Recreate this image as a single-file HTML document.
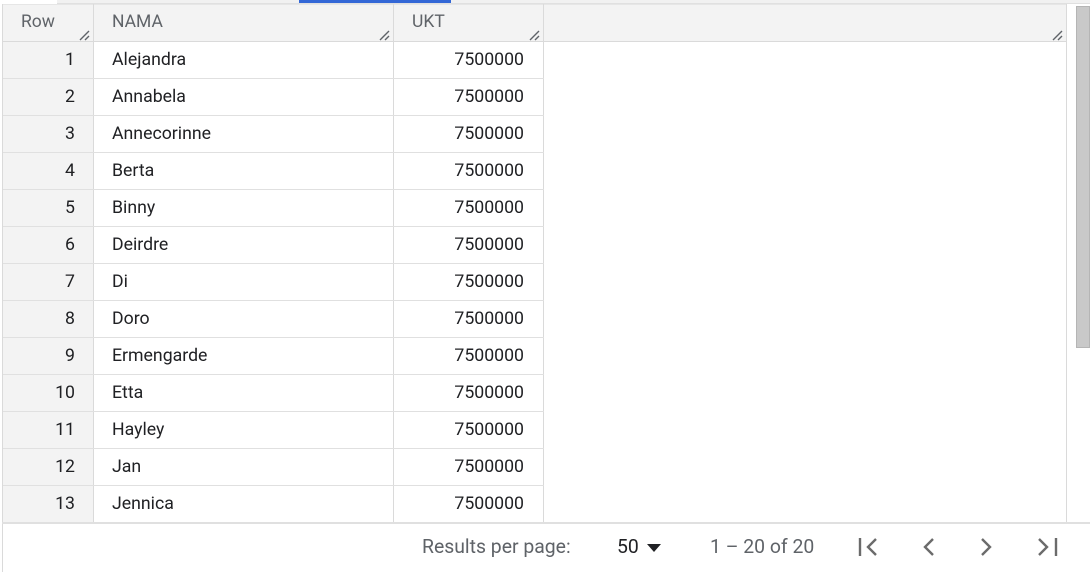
<!DOCTYPE html>
<html><head><meta charset="utf-8"><style>
*{margin:0;padding:0;box-sizing:border-box}
body{width:1090px;height:572px;overflow:hidden;background:#fff;font-family:"Roboto","Liberation Sans",sans-serif;color:#202124;position:relative}
.a{position:absolute}
.top{left:0;top:0;width:1090px;height:4px;background:#f1f1f1;border-bottom:1px solid #e0e0e0}
.blue{left:299px;top:0;width:152px;height:3px;background:#3367d6}
.hdr{left:3px;top:4px;width:1063px;height:38px;background:#f3f3f3;border-bottom:1px solid #dadada;border-top:1px solid #e6e6e6}
.vl{width:1px;background:#dadada}
.hl{height:1px;background:#e0e0e0}
.h{font-size:17.5px;color:#5f6368;top:12px}
.t{font-size:17.7px;line-height:37px}
.ft{font-size:19.4px;color:#5f6368;top:535px}
</style></head><body>
<div class="a top"></div><div class="a" style="left:0;top:0;width:57px;height:4px;background:#fff"></div><div class="a blue"></div>
<div class="a" style="left:3px;top:42px;width:90px;height:481px;background:#f3f3f3"></div>
<div class="a hdr"></div>
<div class="a" style="left:2px;top:4px;width:1px;height:568px;background:#dadada"></div>
<div class="a vl" style="left:93px;top:4px;height:519px"></div>
<div class="a vl" style="left:393px;top:4px;height:519px"></div>
<div class="a vl" style="left:543px;top:4px;height:519px"></div>
<div class="a vl" style="left:1066px;top:4px;height:519px"></div>
<div class="a" style="left:2px;top:522px;width:1088px;height:2px;background:#e0e0e0"></div>
<div class="a" style="left:1076px;top:6px;width:14px;height:342px;background:#c9c9c9;border:1px solid #b5b5b5"></div>
<div class="a h" style="left:21px">Row</div>
<div class="a h" style="left:112px">NAMA</div>
<div class="a h" style="left:412px">UKT</div>
<svg class="a" style="left:0;top:0" width="1090" height="50">
<g stroke="#5f6368" stroke-width="1.4">
<path d="M80 40L89 31M85 40L89 36"/><path d="M380 40L389 31M385 40L389 36"/><path d="M530 40L539 31M535 40L539 36"/><path d="M1053 40L1062 31M1058 40L1062 36"/>
</g></svg>
<div id="rows"></div>
<div class="a ft" style="left:422px">Results per page:</div>
<div class="a ft" style="left:617px;color:#202124">50</div>
<svg class="a" style="left:646px;top:543px" width="16" height="10"><path d="M1 1H15L8 9Z" fill="#202124"/></svg>
<div class="a ft" style="left:710px">1 – 20 of 20</div>
<svg class="a" style="left:850px;top:535px" width="220" height="26" fill="none" stroke="#6b6b6b" stroke-width="2.4">
<path d="M10 3V21"/><path d="M26 4L18 12L26 20"/>
<path d="M83 4L75 12L83 20"/>
<path d="M132 4L140 12L132 20"/>
<path d="M189 4L197 12L189 20"/><path d="M206 3V21"/>
</svg>
<script>
var n=["Alejandra","Annabela","Annecorinne","Berta","Binny","Deirdre","Di","Doro","Ermengarde","Etta","Hayley","Jan","Jennica"],h="";
for(var i=0;i<13;i++){var y=42+i*37;
h+='<div class="a hl" style="left:3px;top:'+(y+36)+'px;width:541px"></div>';
h+='<div class="a t" style="left:3px;top:'+y+'px;width:72px;text-align:right">'+(i+1)+'</div>';
h+='<div class="a t" style="left:112px;top:'+y+'px">'+n[i]+'</div>';
h+='<div class="a t" style="left:394px;top:'+y+'px;width:130px;text-align:right">7500000</div>';}
document.getElementById("rows").innerHTML=h;
</script>
</body></html>
